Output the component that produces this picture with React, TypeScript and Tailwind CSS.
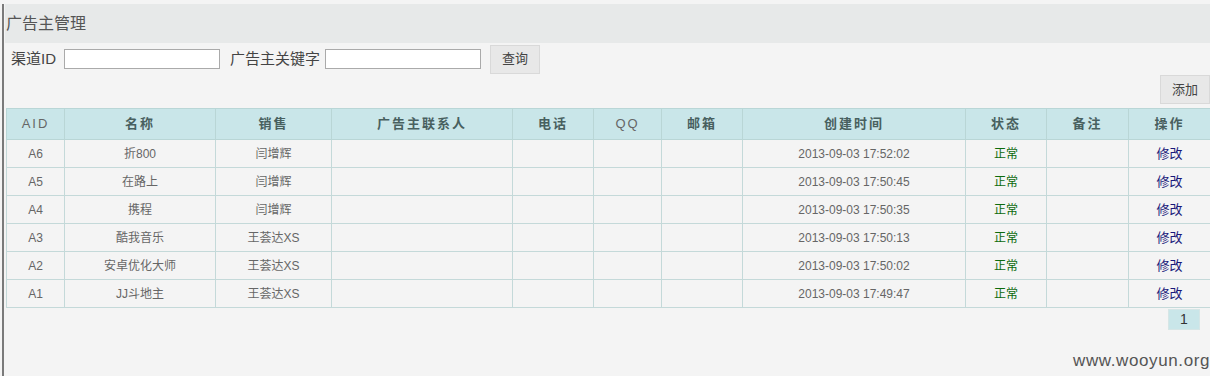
import React from "react";

const cols = [58, 151, 116, 181, 81, 68, 81, 223, 81, 82, 82];
const heads = ["AID", "名称", "销售", "广告主联系人", "电话", "QQ", "邮箱", "创建时间", "状态", "备注", "操作"];
const rows = [
  ["A6", "折800", "闫增辉", "2013-09-03 17:52:02"],
  ["A5", "在路上", "闫增辉", "2013-09-03 17:50:45"],
  ["A4", "携程", "闫增辉", "2013-09-03 17:50:35"],
  ["A3", "酷我音乐", "王荟达XS", "2013-09-03 17:50:13"],
  ["A2", "安卓优化大师", "王荟达XS", "2013-09-03 17:50:02"],
  ["A1", "JJ斗地主", "王荟达XS", "2013-09-03 17:49:47"],
];

const font = { fontFamily: '"Liberation Sans", Arial, "Noto Sans CJK SC", sans-serif' };

export default function App() {
  return (
    <div className="w-[1210px] h-[376px] bg-[#f4f4f4] pt-[4px] overflow-hidden relative" style={font}>
      <div className="ml-[2px] h-[372px] border-l-2 border-[#7a7a7a] pl-[1px] flex flex-col">
        <div className="h-[39px] bg-[#e7e9e9] flex items-center pl-[1px] text-[16px] text-[#555]">广告主管理</div>
        <div className="flex items-center h-[32px] pl-[6px] text-[15px] text-[#444]">
          <span>渠道ID</span>
          <div className="ml-[8px] w-[156px] h-[20px] border border-[#aaa] bg-white" />
          <span className="ml-[10px]">广告主关键字</span>
          <div className="ml-[5px] w-[156px] h-[20px] border border-[#aaa] bg-white" />
          <div className="ml-[9px] w-[50px] h-[29px] bg-[#e8e8e8] border border-[#d9d9d9] flex items-center justify-center text-[13px] text-[#444]">查询</div>
        </div>
        <div className="flex justify-end h-[33px]">
          <div className="w-[50px] h-[29px] bg-[#e8e8e8] border border-[#d9d9d9] flex items-center justify-center text-[13px] text-[#444]">添加</div>
        </div>
        <div className="pl-[1px]">
          <table className="table-fixed border-collapse w-[1204px]">
            <colgroup>
              {cols.map((w, i) => (
                <col key={i} style={{ width: w }} />
              ))}
            </colgroup>
            <thead>
              <tr className="h-[31px] bg-[#c9e6e9]">
                {heads.map((h) => (
                  <th key={h} className="border border-[#b9d6d6] text-[13px] font-bold tracking-[2px] text-[#48605f] p-0">
                    {h === "AID" || h === "QQ" ? <span className="font-normal text-[#666]">{h}</span> : h}
                  </th>
                ))}
              </tr>
            </thead>
            <tbody>
              {rows.map((r) => (
                <tr key={r[0]} className="h-[28px] text-[12px] text-[#666]">
                  <td className="border border-[#c4d9d9] text-center p-0">{r[0]}</td>
                  <td className="border border-[#c4d9d9] text-center p-0">{r[1]}</td>
                  <td className="border border-[#c4d9d9] text-center p-0">{r[2]}</td>
                  <td className="border border-[#c4d9d9] p-0"></td>
                  <td className="border border-[#c4d9d9] p-0"></td>
                  <td className="border border-[#c4d9d9] p-0"></td>
                  <td className="border border-[#c4d9d9] p-0"></td>
                  <td className="border border-[#c4d9d9] text-center p-0">{r[3]}</td>
                  <td className="border border-[#c4d9d9] text-center p-0 text-[#0d6b0d]">正常</td>
                  <td className="border border-[#c4d9d9] p-0"></td>
                  <td className="border border-[#c4d9d9] text-center p-0 text-[13px] text-[#18187a]">修改</td>
                </tr>
              ))}
            </tbody>
          </table>
          <div className="flex justify-end pr-[10px] pt-[1px]">
            <div className="w-[32px] h-[21px] bg-[#c9e6e9] border border-[#d6e6e6] flex items-center justify-center text-[14px] text-[#333]">1</div>
          </div>
        </div>
        <div className="flex-1 flex items-end justify-end pb-[3px] text-[17px] text-[#555] tracking-[0.6px]">www.wooyun.org</div>
      </div>
    </div>
  );
}
